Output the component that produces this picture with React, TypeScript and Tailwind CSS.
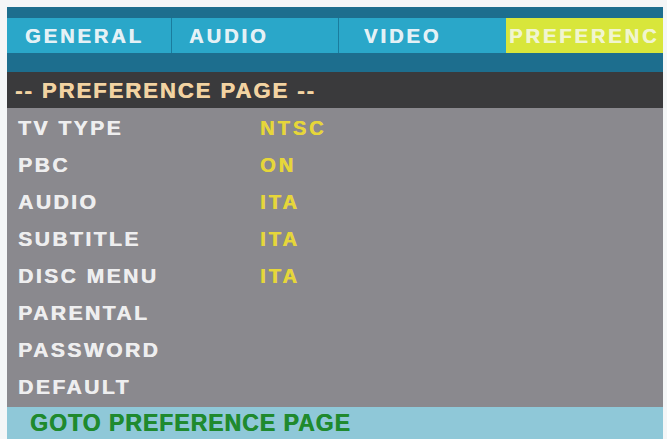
import React from "react";

const rows: { label: string; value?: string }[] = [
  { label: "TV TYPE", value: "NTSC" },
  { label: "PBC", value: "ON" },
  { label: "AUDIO", value: "ITA" },
  { label: "SUBTITLE", value: "ITA" },
  { label: "DISC MENU", value: "ITA" },
  { label: "PARENTAL" },
  { label: "PASSWORD" },
  { label: "DEFAULT" },
];

export default function App() {
  return (
    <div
      className="w-[667px] h-[439px] bg-[#f4f6f7] overflow-hidden"
      style={{ fontFamily: '"Liberation Sans", Arial, sans-serif' }}
    >
      <div className="ml-[7px] mt-[7px] w-[656px] h-[432px] flex flex-col font-bold [text-shadow:0.6px_0_0_currentColor]">
        {/* Tabs */}
        <div className="bg-[#1d6e8e] pt-[11px] pb-[19px]">
          <div className="flex h-[35px] text-[20px] tracking-[3px] text-[#e4f1f6]">
            <div className="w-[165px] bg-[#2aa7c9] flex items-center pl-[18px] border-r border-[#1a7c9e]">
              GENERAL
            </div>
            <div className="w-[167px] bg-[#2aa7c9] flex items-center pl-[17px] border-r border-[#1a7c9e]">
              AUDIO
            </div>
            <div className="w-[167px] bg-[#2aa7c9] flex items-center pl-[25px]">
              VIDEO
            </div>
            <div className="flex-1 bg-[#d8e63b] flex items-center pl-[3px] overflow-hidden whitespace-nowrap text-[#f1f5cf]">
              PREFERENC
            </div>
          </div>
        </div>
        {/* Header */}
        <div className="h-[36px] bg-[#3a3a3c] flex items-center pl-[8px] text-[22px] tracking-[2px] text-[#f2d3a2] whitespace-nowrap">
          -- PREFERENCE PAGE --
        </div>
        {/* Rows */}
        <div className="flex-1 bg-[#8a898e] pt-[1px]">
          {rows.map((r) => (
            <div key={r.label} className="h-[37px] flex items-center">
              <div className="w-[253px] pl-[11px] text-[21px] tracking-[2.5px] text-[#eeeeef] whitespace-nowrap">
                {r.label}
              </div>
              {r.value && (
                <div className="text-[20px] tracking-[3px] text-[#e6d63a]">{r.value}</div>
              )}
            </div>
          ))}
        </div>
        {/* Bottom bar */}
        <div className="h-[32px] bg-[#8fc8d8] flex items-center pl-[23px] text-[23px] tracking-[1px] text-[#1f8a2e] whitespace-nowrap">
          GOTO PREFERENCE PAGE
        </div>
      </div>
    </div>
  );
}
